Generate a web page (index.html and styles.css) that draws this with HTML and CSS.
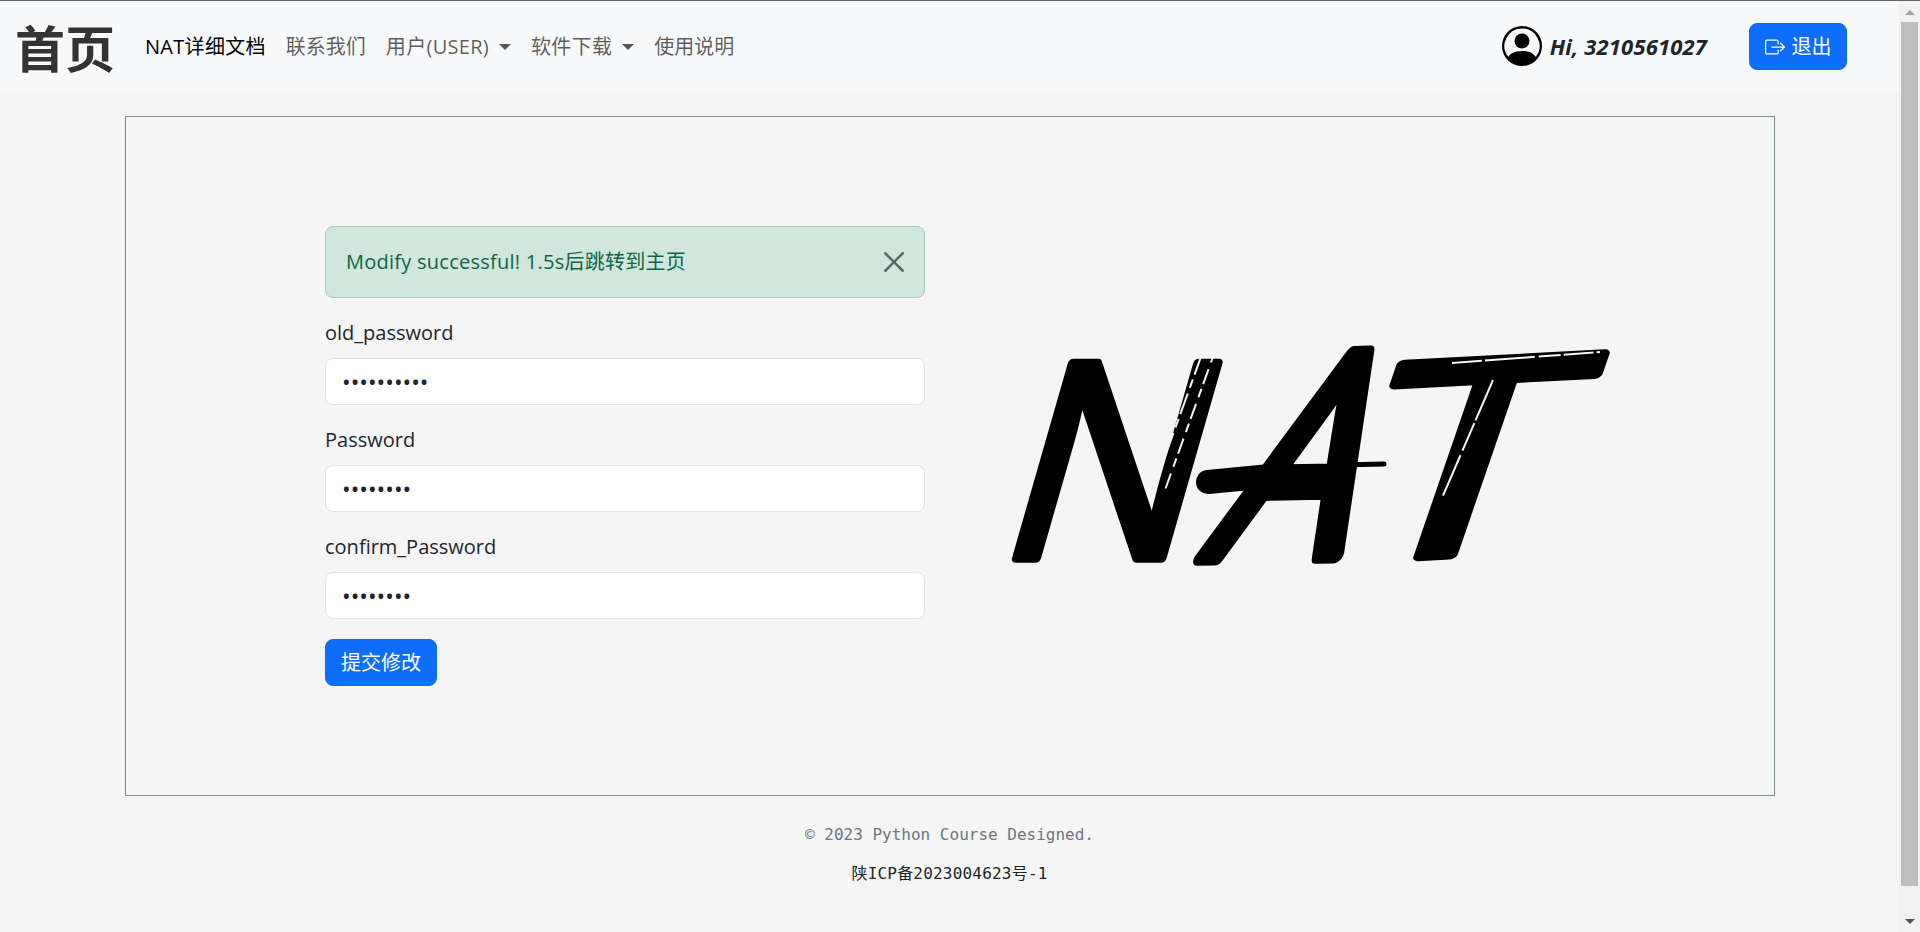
FILE: index.html
```html
<!DOCTYPE html>
<html lang="zh-CN">
<head>
<meta charset="utf-8">
<title>NAT</title>
<link rel="stylesheet" href="styles.css">
</head>
<body>
<div class="page">
  <header class="navbar">
    <a class="brand">首页</a>
    <nav class="nav">
      <a class="nav-link active">NAT详细文档</a>
      <a class="nav-link">联系我们</a>
      <a class="nav-link caret">用户(USER)</a>
      <a class="nav-link caret">软件下载</a>
      <a class="nav-link">使用说明</a>
    </nav>
    <div class="user">
      <svg class="avatar" viewBox="0 0 16 16" fill="#000"><path d="M11 6a3 3 0 1 1-6 0 3 3 0 0 1 6 0z"/><path fill-rule="evenodd" d="M0 8a8 8 0 1 1 16 0A8 8 0 0 1 0 8zm8-7a7 7 0 0 0-5.468 11.37C3.242 11.226 4.805 10 8 10s4.757 1.225 5.468 2.37A7 7 0 0 0 8 1z"/></svg>
      <span class="hi">Hi, 3210561027</span>
    </div>
    <a class="btn btn-logout">
      <svg class="logout-icon" viewBox="0 0 16 16" fill="currentColor"><path fill-rule="evenodd" d="M10 12.5a.5.5 0 0 1-.5.5h-8a.5.5 0 0 1-.5-.5v-9a.5.5 0 0 1 .5-.5h8a.5.5 0 0 1 .5.5v2a.5.5 0 0 0 1 0v-2A1.5 1.5 0 0 0 9.5 2h-8A1.5 1.5 0 0 0 0 3.5v9A1.5 1.5 0 0 0 1.500 14h8a1.500 1.500 0 0 0 1.500-1.500v-2a.5.5 0 0 0-1 0v2z"/><path fill-rule="evenodd" d="M15.854 8.354a.5.5 0 0 0 0-.708l-3-3a.5.5 0 0 0-.708.708L14.293 7.500H5.500a.5.5 0 0 0 0 1h8.793l-2.147 2.146a.5.5 0 0 0 .708.708l3-3z"/></svg>
      <span>退出</span>
    </a>
  </header>

  <main class="panel">
    <form class="form">
      <div class="alert">
        <span>Modify successful! 1.5s后跳转到主页</span>
        <svg class="close" viewBox="0 0 16 16" fill="#000"><path d="M.293.293a1 1 0 0 1 1.414 0L8 6.586 14.293.293a1 1 0 1 1 1.414 1.414L9.414 8l6.293 6.293a1 1 0 0 1-1.414 1.414L8 9.414l-6.293 6.293a1 1 0 0 1-1.414-1.414L6.586 8 .293 1.707a1 1 0 0 1 0-1.414z"/></svg>
      </div>
      <div class="field">
        <label class="label" for="old">old_password</label>
        <input class="input" id="old" type="password" value="1234567890">
      </div>
      <div class="field">
        <label class="label" for="new">Password</label>
        <input class="input" id="new" type="password" value="12345678">
      </div>
      <div class="field">
        <label class="label" for="confirm">confirm_Password</label>
        <input class="input" id="confirm" type="password" value="12345678">
      </div>
      <button class="btn btn-submit" type="button">提交修改</button>
    </form>

    <svg class="logo" viewBox="-65 0 775 440">
      <text class="logo-text" transform="translate(1 322) skewX(-16) scale(.9 .94)">N</text>
      <text class="logo-text logo-a" transform="translate(210 322) rotate(-1) skewX(-25) scale(.75 .97)">A</text>
      <text class="logo-text" transform="translate(342 325) rotate(-3) skewX(-22) scale(1.3 .93)">T</text>
      <g class="strokes">
        <line class="stroke-bar" x1="218" y1="246" x2="280" y2="240"/>
        <line class="stroke-flick" x1="350" y1="229" x2="394" y2="228"/>
      </g>
      <g class="scratches">
        <line x1="212" y1="118" x2="163" y2="254" stroke-dasharray="22 5 9 6"/>
        <line x1="224" y1="118" x2="175" y2="254" stroke-dasharray="9 7 16 5"/>
        <line x1="338" y1="124" x2="262" y2="226" stroke-dasharray="18 10 4 9"/>
        <line x1="462" y1="127" x2="610" y2="116" stroke-dasharray="30 3 50 4 22 3"/>
        <line x1="503" y1="144" x2="452" y2="262" stroke-dasharray="44 3 30 5"/>
      </g>
    </svg>
  </main>

  <footer class="footer">
    <p class="copy">© 2023 Python Course Designed.</p>
    <p class="icp">陕ICP备2023004623号-1</p>
  </footer>
</div>

<aside class="scrollbar">
  <span class="arrow arrow-up"></span>
  <span class="thumb"></span>
  <span class="arrow arrow-down"></span>
</aside>
</body>
</html>
```
FILE: styles.css
```css
* { box-sizing: border-box; }
html, body { margin: 0; height: 100%; overflow: hidden; }
body {
  background: #f5f5f5;
  color: #212529;
  font-family: "Open Sans", "Noto Sans CJK SC", sans-serif;
  font-size: 20px;
  line-height: 30px;
  border-top: 1px solid #5f6368;
}
.page { width: 1899px; }

.navbar {
  height: 90px;
  background: #f8f9fa;
  display: flex;
  align-items: center;
  padding: 0 52px 0 15px;
}
.brand {
  width: 100px;
  font-size: 50px;
  line-height: 60px;
  font-weight: 700;
  color: #333;
  font-family: "Noto Sans CJK SC", sans-serif;
  margin-right: 30px;
  white-space: nowrap;
}
.nav { display: flex; align-items: center; gap: 20px; flex: 1; padding-top: 2px; }
.nav-link { color: rgba(0,0,0,.65); }
.nav-link.active { color: #000; letter-spacing: .3px; }
.caret { display: flex; align-items: center; letter-spacing: .3px; }
.caret::after {
  content: "";
  margin-left: 10px;
  border-top: 6px solid rgba(0,0,0,.65);
  border-left: 6px solid transparent;
  border-right: 6px solid transparent;
}
.user { display: flex; align-items: center; gap: 8px; margin-right: 42px; }
.avatar { width: 40px; height: 40px; display: block; }
.hi { font-size: 22px; font-weight: 700; font-style: italic; letter-spacing: .15px; }

.btn {
  display: inline-flex;
  align-items: center;
  justify-content: center;
  background: #0d6efd;
  color: #fff;
  border: 1px solid #0d6efd;
  border-radius: 8px;
  font: inherit;
  height: 47px;
  padding: 1px 0 0;
}
.btn-logout { width: 98px; gap: 7px; }
.logout-icon { width: 20px; height: 20px; }
.btn-submit { width: 112px; }

.panel {
  margin: 25px 124px 0 125px;
  height: 680px;
  border: 1px solid #7c8a86;
  display: flex;
  align-items: center;
  padding-left: 199px;
}
.form { width: 600px; flex: none; }
.alert {
  height: 72px;
  display: flex;
  align-items: center;
  justify-content: space-between;
  padding: 0 20px;
  margin-bottom: 20px;
  background: #d1e7dd;
  border: 1px solid #a3cfbb;
  border-radius: 8px;
  color: #0a6644;
  letter-spacing: .25px;
}
.close { width: 20px; height: 20px; opacity: .55; }
.field { margin-bottom: 20px; }
.label { display: block; margin-bottom: 10px; }
.input {
  display: block;
  width: 100%;
  height: 47px;
  padding: 0 16px;
  background: #fff;
  border: 1px solid #dee2e6;
  border-radius: 8px;
  font: inherit;
  font-size: 23px;
  color: #212529;
  outline: none;
}

.logo { width: 775px; height: 440px; flex: none; display: block; }
.logo-text {
  font-family: "Open Sans", sans-serif;
  font-size: 290px;
  font-weight: 400;
  fill: #000;
  stroke: #000;
  stroke-width: 10px;
  stroke-linejoin: round;
}
.logo-a { stroke-width: 16px; }
.strokes line { stroke: #000; stroke-linecap: round; }
.stroke-bar { stroke-width: 24px; }
.stroke-flick { stroke-width: 5px; }
.scratches line { stroke: #f5f5f5; stroke-width: 2px; fill: none; }

.footer { text-align: center; font-family: "DejaVu Sans Mono", "Noto Sans CJK SC", monospace; font-size: 16px; line-height: 24px; padding-top: 27px; }
.footer p { margin: 0 0 15px; }
.copy { color: #6c757d; }
.icp { letter-spacing: .2px; }

.scrollbar {
  position: fixed;
  top: 1px; right: 0; bottom: 0;
  width: 21px;
  background: #f1f1f1;
  display: flex;
  flex-direction: column;
  align-items: center;
}
.thumb { width: 17px; height: 864px; background: #bdbdbd; flex: none; }
.arrow { height: 21px; flex: none; position: relative; width: 100%; }
.arrow-down { margin-top: auto; }
.arrow::after {
  content: "";
  position: absolute;
  left: 6px;
  border-left: 5px solid transparent;
  border-right: 5px solid transparent;
}
.arrow-up::after { top: 9px; border-bottom: 5px solid #a3a3a3; }
.arrow-down::after { bottom: 8px; border-top: 5px solid #505050; }
```
